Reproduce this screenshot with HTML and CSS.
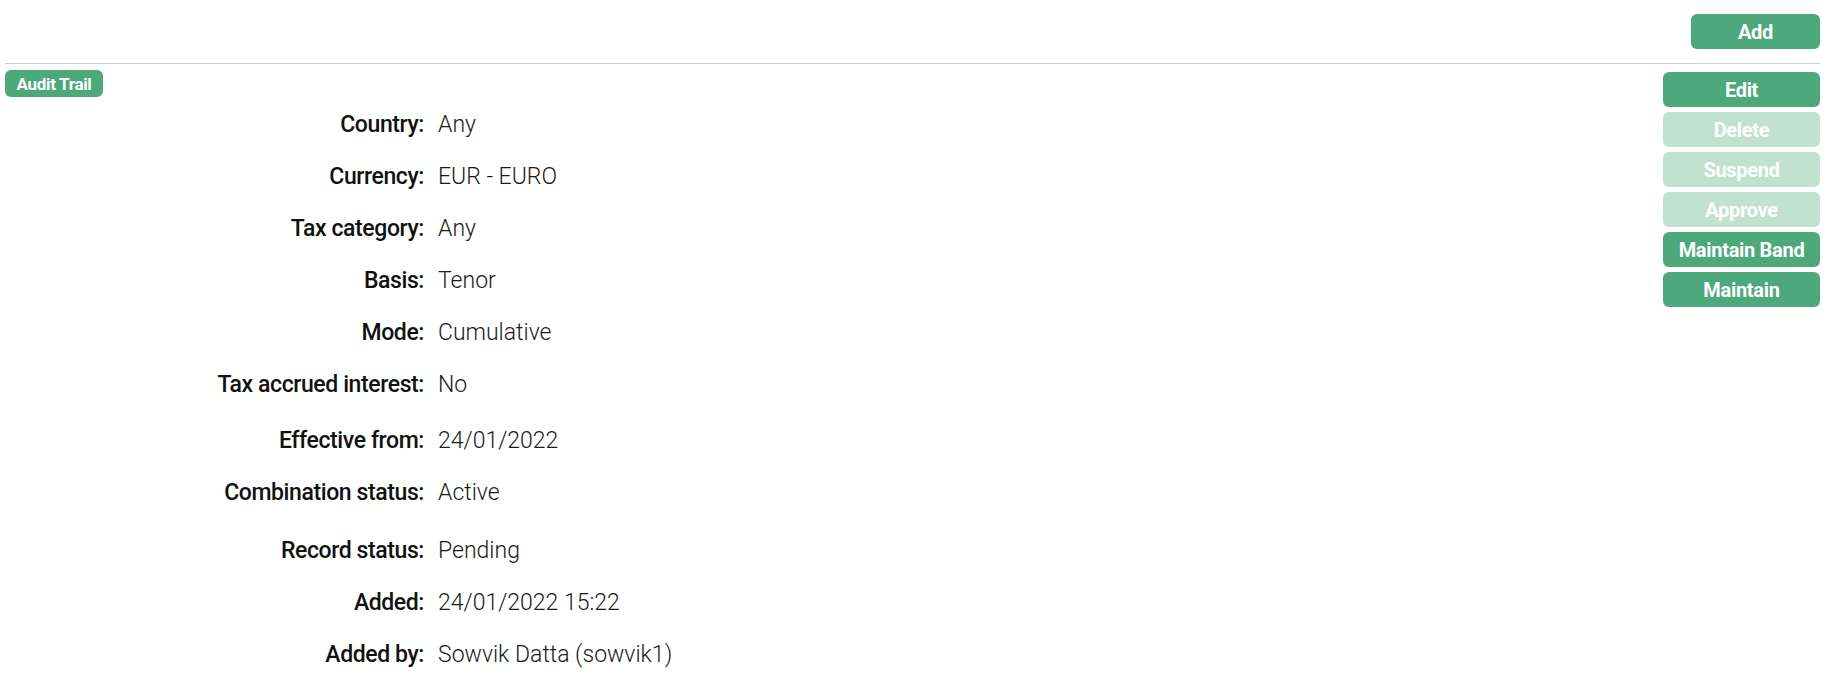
FILE: index.html
```html
<!DOCTYPE html>
<html>
<head>
<meta charset="utf-8">
<link rel="stylesheet" href="styles.css">
</head>
<body>
<div class="topbar">
  <button class="btn btn-add">Add</button>
</div>
<div class="main">
  <div class="content">
    <button class="btn btn-small">Audit Trail</button>
    <div class="details">
      <div class="row"><span class="label">Country:</span><span class="value">Any</span></div>
      <div class="row"><span class="label">Currency:</span><span class="value">EUR - EURO</span></div>
      <div class="row"><span class="label">Tax category:</span><span class="value">Any</span></div>
      <div class="row"><span class="label">Basis:</span><span class="value">Tenor</span></div>
      <div class="row"><span class="label">Mode:</span><span class="value">Cumulative</span></div>
      <div class="row"><span class="label">Tax accrued interest:</span><span class="value">No</span></div>
      <div class="row row-gap-s"><span class="label">Effective from:</span><span class="value">24/01/2022</span></div>
      <div class="row"><span class="label">Combination status:</span><span class="value">Active</span></div>
      <div class="row row-gap-l"><span class="label">Record status:</span><span class="value">Pending</span></div>
      <div class="row"><span class="label">Added:</span><span class="value">24/01/2022 15:22</span></div>
      <div class="row"><span class="label">Added by:</span><span class="value">Sowvik Datta (sowvik1)</span></div>
    </div>
  </div>
  <div class="actions">
    <button class="btn btn-action">Edit</button>
    <button class="btn btn-action" disabled>Delete</button>
    <button class="btn btn-action" disabled>Suspend</button>
    <button class="btn btn-action" disabled>Approve</button>
    <button class="btn btn-action">Maintain Band</button>
    <button class="btn btn-action">Maintain</button>
  </div>
</div>
</body>
</html>
```
FILE: styles.css
```css
html, body {
  margin: 0;
  padding: 0;
  background: #ffffff;
}
body {
  font-family: Roboto, "Liberation Sans", sans-serif;
  color: #111;
  padding: 0 24px 0 5px;
}
.btn {
  font-family: Roboto, "Liberation Sans", sans-serif;
  font-weight: 700;
  color: #fff;
  background: #4da87c;
  border: none;
  border-radius: 6px;
  padding: 0;
  cursor: pointer;
  letter-spacing: -0.3px;
}
.btn:disabled {
  opacity: 0.34;
  cursor: default;
}
.topbar {
  display: flex;
  justify-content: flex-end;
  align-items: flex-start;
  height: 64px;
  padding-top: 14px;
  box-sizing: border-box;
  border-bottom: 1px solid #cfcfcf;
}
.btn-add {
  width: 129px;
  height: 35px;
  font-size: 20px;
}
.main {
  display: flex;
  align-items: flex-start;
}
.content {
  flex: 1;
  padding-top: 6px;
}
.btn-small {
  width: 98px;
  height: 27px;
  font-size: 17px;
  border-radius: 6px;
  display: block;
}
.details {
  margin-top: 2px;
  display: flex;
  flex-direction: column;
}
.row {
  display: grid;
  grid-template-columns: 419px 1fr;
  column-gap: 14px;
  height: 52px;
  line-height: 52px;
  font-size: 23px;
}
.row-gap-s { margin-top: 4px; }
.row-gap-l { margin-top: 6px; }
.label {
  text-align: right;
  font-weight: 500;
  color: #111;
  letter-spacing: -0.4px;
}
.value {
  font-weight: 300;
  color: #1a1a1a;
}
.actions {
  width: 157px;
  display: flex;
  flex-direction: column;
  gap: 5px;
  padding-top: 8px;
}
.btn-action {
  height: 35px;
  font-size: 20px;
}
```
